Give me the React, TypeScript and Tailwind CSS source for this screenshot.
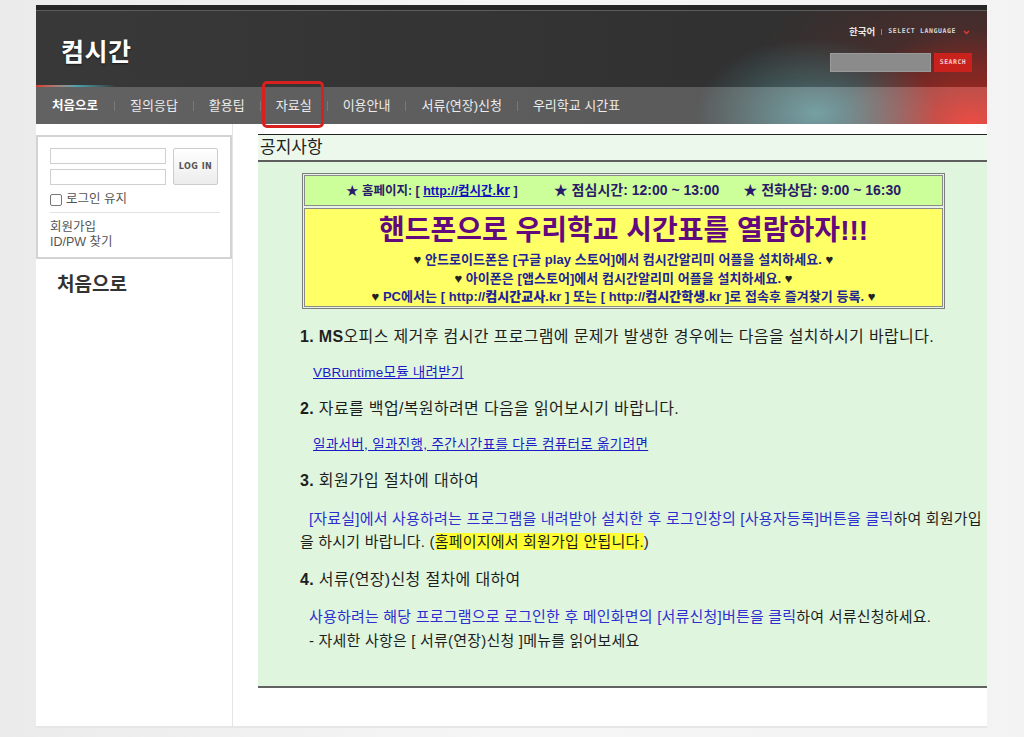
import React from "react";

const navItems = ["처음으로", "질의응답", "활용팁", "자료실", "이용안내", "서류(연장)신청", "우리학교 시간표"];

export default function App() {
  return (
    <div className="min-h-[737px] w-full bg-gradient-to-r from-[#ebebeb] via-[#f6f6f6] to-[#f3f3f3] font-['Liberation_Sans','Noto_Sans_CJK_KR',sans-serif]">
      <div className="ml-[36px] w-[951px] pt-[5px]">
        {/* Header + Nav */}
        <div className="bg-[image:radial-gradient(ellipse_120px_75px_at_780px_108px,rgba(100,165,170,0.8),transparent),radial-gradient(ellipse_130px_95px_at_935px_120px,rgba(235,45,35,1),transparent),radial-gradient(ellipse_220px_110px_at_940px_60px,rgba(150,50,45,0.5),transparent),linear-gradient(90deg,#474747,#404040_55%,#3b3b3b)]">
          <div className="h-[5px] bg-[#262626] border-b border-[#5c5c5c] box-content" />
          <div className="h-[76px] flex justify-between bg-black/20">
            <div className="pl-[25px] pt-[29px] text-[25px] font-bold text-white leading-none tracking-[0.5px] [text-shadow:0_1px_2px_rgba(0,0,0,0.6)]">
              컴시간
            </div>
            <div className="pr-[15px] pt-[16px] flex flex-col items-end">
              <div className="flex items-center h-[10px] gap-[6px] pr-[2px]">
                <span className="text-[9.5px] font-bold text-[#e6e6e6]">한국어</span>
                <span className="w-px h-[6px] bg-[#888]" />
                <span className="text-[6.5px] font-bold text-[#d8d8d8] tracking-[0.6px] font-['DejaVu_Sans_Mono',monospace]">SELECT LANGUAGE</span>
                <svg width="7" height="5" viewBox="0 0 7 5" className="ml-[1px]">
                  <path d="M1 1 L3.5 3.5 L6 1" stroke="#e03a30" strokeWidth="1.5" fill="none" />
                </svg>
              </div>
              <div className="mt-[16px] flex gap-[3px]">
                <div className="w-[101px] h-[19px] bg-[#8b8b8b] border border-[#9b9b9b]" />
                <div className="w-[38px] h-[19px] bg-[#c9221c] flex items-center justify-center text-[6.5px] font-bold text-[#f5c9c6] tracking-[0.5px] font-['DejaVu_Sans_Mono',monospace]">
                  SEARCH
                </div>
              </div>
            </div>
          </div>
          <div className="h-[2px] w-[80px] -mt-[2px] bg-gradient-to-r from-[#d8352a] via-[#4aa5b0] to-transparent" />
          <div className="h-[37px] flex items-center pl-[16px] bg-white/15 relative">
            {navItems.map((item, i) => (
              <React.Fragment key={item}>
                {i > 0 && <span className="w-px h-[10px] bg-[#8a8a8a]/60" />}
                <span
                  className={
                    "relative leading-[18px] " +
                    (i === 0 ? "pr-[16px] text-[12.5px] font-bold text-white" : "px-[15px] text-[13px] text-[#ececec]")
                  }
                >
                  {item}
                  {i === 3 && (
                    <span className="absolute left-[1px] right-[3px] -top-[16px] -bottom-[13px] border-[3px] border-[#d8201e] rounded-[5px]" />
                  )}
                </span>
              </React.Fragment>
            ))}
          </div>
        </div>

        {/* Body */}
        <div className="bg-white flex h-[604px] border-b-2 border-[#e6e6e6]">
          {/* Sidebar */}
          <div className="w-[197px] border-r border-[#e4e4e4] pt-[11px]">
            <div className="h-[124px] border-2 border-[#d3d3d3] pt-[11px] px-[12px]">
              <div className="flex gap-[7px]">
                <div className="flex flex-col gap-[5px]">
                  <div className="w-[116px] h-[16px] border border-[#cfcfcf] bg-white" />
                  <div className="w-[116px] h-[16px] border border-[#cfcfcf] bg-white" />
                </div>
                <div className="w-[47px] h-[37px] border border-[#cccccc] rounded-[2px] bg-gradient-to-b from-white to-[#ececec] flex items-center justify-center text-[8px] font-bold text-[#555] tracking-[0.5px] font-['DejaVu_Sans',sans-serif]">
                  LOG IN
                </div>
              </div>
              <div className="mt-[8px] flex items-center gap-[4px] h-[13px]">
                <span className="w-[12px] h-[12px] border border-[#777] rounded-[2px] bg-white" />
                <span className="text-[12.5px] text-[#555]">로그인 유지</span>
              </div>
              <div className="mt-[6px] border-t border-[#e2e2e2] w-[170px]" />
              <div className="mt-[7px] text-[12.5px] leading-[15px] text-[#555]">
                <div>회원가입</div>
                <div>ID/PW 찾기</div>
              </div>
            </div>
            <div className="pl-[21px] pt-[12px] text-[19px] font-bold text-[#333]">처음으로</div>
          </div>

          {/* Content */}
          <div className="ml-[25px] mt-[10px] w-[729px]">
            <div className="h-[28px] border-t border-[#222] border-b-2 border-b-[#5e5e5e] bg-[#edf8ec] pl-[2px] flex items-center text-[17px] text-[#222]">
              공지사항
            </div>
            <div className="h-[526px] bg-[#dff5de] border-b-2 border-[#626262] pt-[11px]">
              {/* Notice table */}
              <div className="ml-[44px] w-[643px] border border-[#7d7d7d] p-[1px] flex flex-col gap-[2px] bg-[#e8f3e8]">
                <div className="h-[31px] border border-[#8a8a8a] bg-[#ccff99] flex items-center justify-center text-[#2a1a6a] whitespace-nowrap">
                  <span className="text-[12.5px] font-semibold">
                    ★ 홈페이지: [ <span className="text-[#1010c0] underline">http://컴시간.<span className="text-[15px]">kr</span></span> ]
                  </span>
                  <span className="ml-[36px] text-[14px] font-bold">★ 점심시간: 12:00 ~ 13:00</span>
                  <span className="ml-[24px] text-[14px] font-bold">★ 전화상담: 9:00 ~ 16:30</span>
                </div>
                <div className="h-[99px] border border-[#8a8a8a] bg-[#ffff66] flex flex-col items-center pt-[4px] whitespace-nowrap">
                  <div className="text-[28px] font-bold text-[#62097e] leading-[35px]">핸드폰으로 우리학교 시간표를 열람하자!!!</div>
                  <div className="mt-[3px] text-[13px] font-semibold leading-[18.5px] text-[#1e2496] flex flex-col items-center tracking-[0.05px]">
                    <div>
                      <span className="text-[#222]">♥</span> 안드로이드폰은 [구글 <b>play</b> 스토어]에서 컴시간알리미 어플을 설치하세요. <span className="text-[#222]">♥</span>
                    </div>
                    <div>
                      <span className="text-[#222]">♥</span> 아이폰은 [앱스토어]에서 컴시간알리미 어플을 설치하세요. <span className="text-[#222]">♥</span>
                    </div>
                    <div>
                      <span className="text-[#222]">♥</span> <b>PC</b>에서는 [ <b>http://컴시간교사.kr</b> ] 또는 [ <b>http://컴시간학생.kr</b> ]로 접속후 즐겨찾기 등록. <span className="text-[#222]">♥</span>
                    </div>
                  </div>
                </div>
              </div>

              {/* Items */}
              <div className="pl-[42px] mt-[17px] text-[#1e1e1e] whitespace-nowrap">
                <div className="text-[16px] leading-[22px] tracking-[0.35px]">
                  <b>1. MS</b>오피스 제거후 컴시간 프로그램에 문제가 발생한 경우에는 다음을 설치하시기 바랍니다.
                </div>
                <div className="mt-[14px] pl-[13px] text-[13.5px] leading-[22px] tracking-[0.25px] text-[#1a1ac8] underline">VBRuntime모듈 내려받기</div>
                <div className="mt-[14px] text-[16px] leading-[22px] tracking-[0.35px]">
                  <b>2.</b> 자료를 백업/복원하려면 다음을 읽어보시기 바랍니다.
                </div>
                <div className="mt-[14px] pl-[13px] text-[13.5px] leading-[22px] tracking-[0.35px] text-[#1a1ac8] underline">
                  일과서버, 일과진행, 주간시간표를 다른 컴퓨터로 옮기려면
                </div>
                <div className="mt-[14px] text-[16px] leading-[22px] tracking-[0.35px]">
                  <b>3.</b> 회원가입 절차에 대하여
                </div>
                <div className="mt-[15px] text-[15px] leading-[23px] tracking-[0.2px]">
                  <div className="pl-[9px]">
                    <span className="text-[#2e2ed0]">[자료실]에서 사용하려는 프로그램을 내려받아 설치한 후 로그인창의 [사용자등록]버튼을 클릭</span>하여 회원가입
                  </div>
                  <div>
                    을 하시기 바랍니다. (<span className="bg-[#ffff33]">홈페이지에서 회원가입 안됩니다.</span>)
                  </div>
                </div>
                <div className="mt-[16px] text-[16px] leading-[22px] tracking-[0.35px]">
                  <b>4.</b> 서류(연장)신청 절차에 대하여
                </div>
                <div className="mt-[14px] pl-[9px] text-[15px] leading-[24px] tracking-[0.2px]">
                  <div>
                    <span className="text-[#2e2ed0]">사용하려는 해당 프로그램으로 로그인한 후 메인화면의 [서류신청]버튼을 클릭</span>하여 서류신청하세요.
                  </div>
                  <div>- 자세한 사항은 [ 서류(연장)신청 ]메뉴를 읽어보세요</div>
                </div>
              </div>
            </div>
          </div>
        </div>
      </div>
    </div>
  );
}
